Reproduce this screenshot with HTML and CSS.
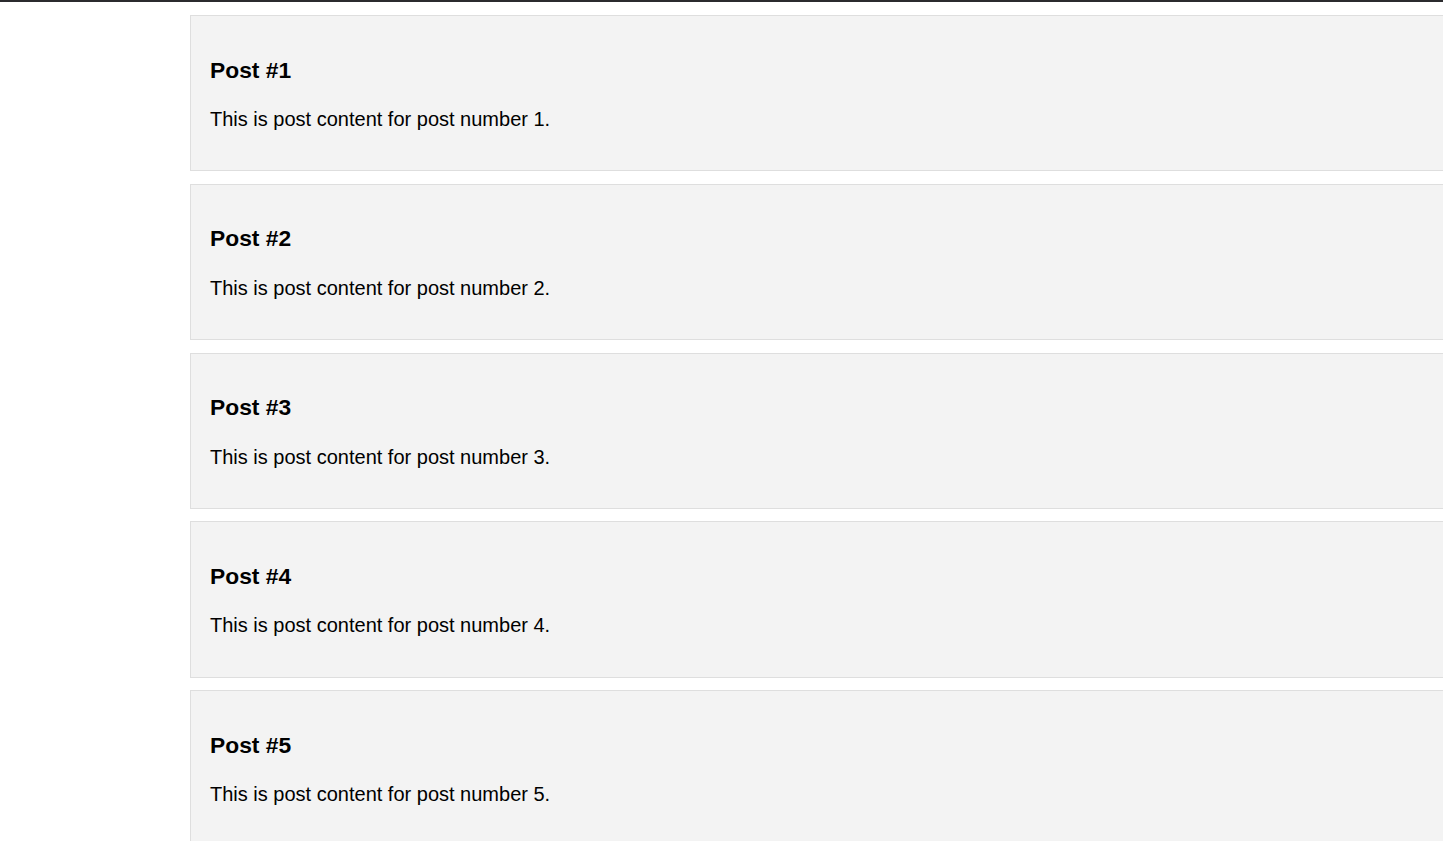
FILE: index.html
```html
<!DOCTYPE html>
<html lang="en">
<head>
<meta charset="utf-8">
<title>Posts</title>
<link rel="stylesheet" href="styles.css">
</head>
<body>
<div class="topbar"></div>
<main class="feed">
  <article class="post"><h3 class="post-title">Post #1</h3><p class="post-body">This is post content for post number 1.</p></article>
  <article class="post"><h3 class="post-title">Post #2</h3><p class="post-body">This is post content for post number 2.</p></article>
  <article class="post"><h3 class="post-title">Post #3</h3><p class="post-body">This is post content for post number 3.</p></article>
  <article class="post"><h3 class="post-title">Post #4</h3><p class="post-body">This is post content for post number 4.</p></article>
  <article class="post"><h3 class="post-title">Post #5</h3><p class="post-body">This is post content for post number 5.</p></article>
  <article class="post"><h3 class="post-title">Post #6</h3><p class="post-body">This is post content for post number 6.</p></article>
</main>
</body>
</html>
```
FILE: styles.css
```css
html, body {
  margin: 0;
  padding: 0;
  overflow: hidden;
  background: #ffffff;
}
body {
  font-family: "Liberation Sans", Arial, sans-serif;
  font-size: 20px;
  color: #000000;
}
.topbar {
  height: 2px;
  background: #2b2b2e;
}
.feed {
  display: flex;
  flex-direction: column;
  gap: 12.5px;
  padding-top: 13px;
  margin-left: 190px;
  width: 1400px;
}
.post {
  background: #f3f3f3;
  border: 1px solid #dedede;
  padding: 20px 20px 20px 19px;
}
.post-title {
  font-size: 22.8px;
  line-height: 27px;
  font-weight: bold;
  margin: 20.5px 0 0;
}
.post-body {
  font-size: 20px;
  line-height: 23px;
  margin: 24.5px 0 19.25px;
}
```
